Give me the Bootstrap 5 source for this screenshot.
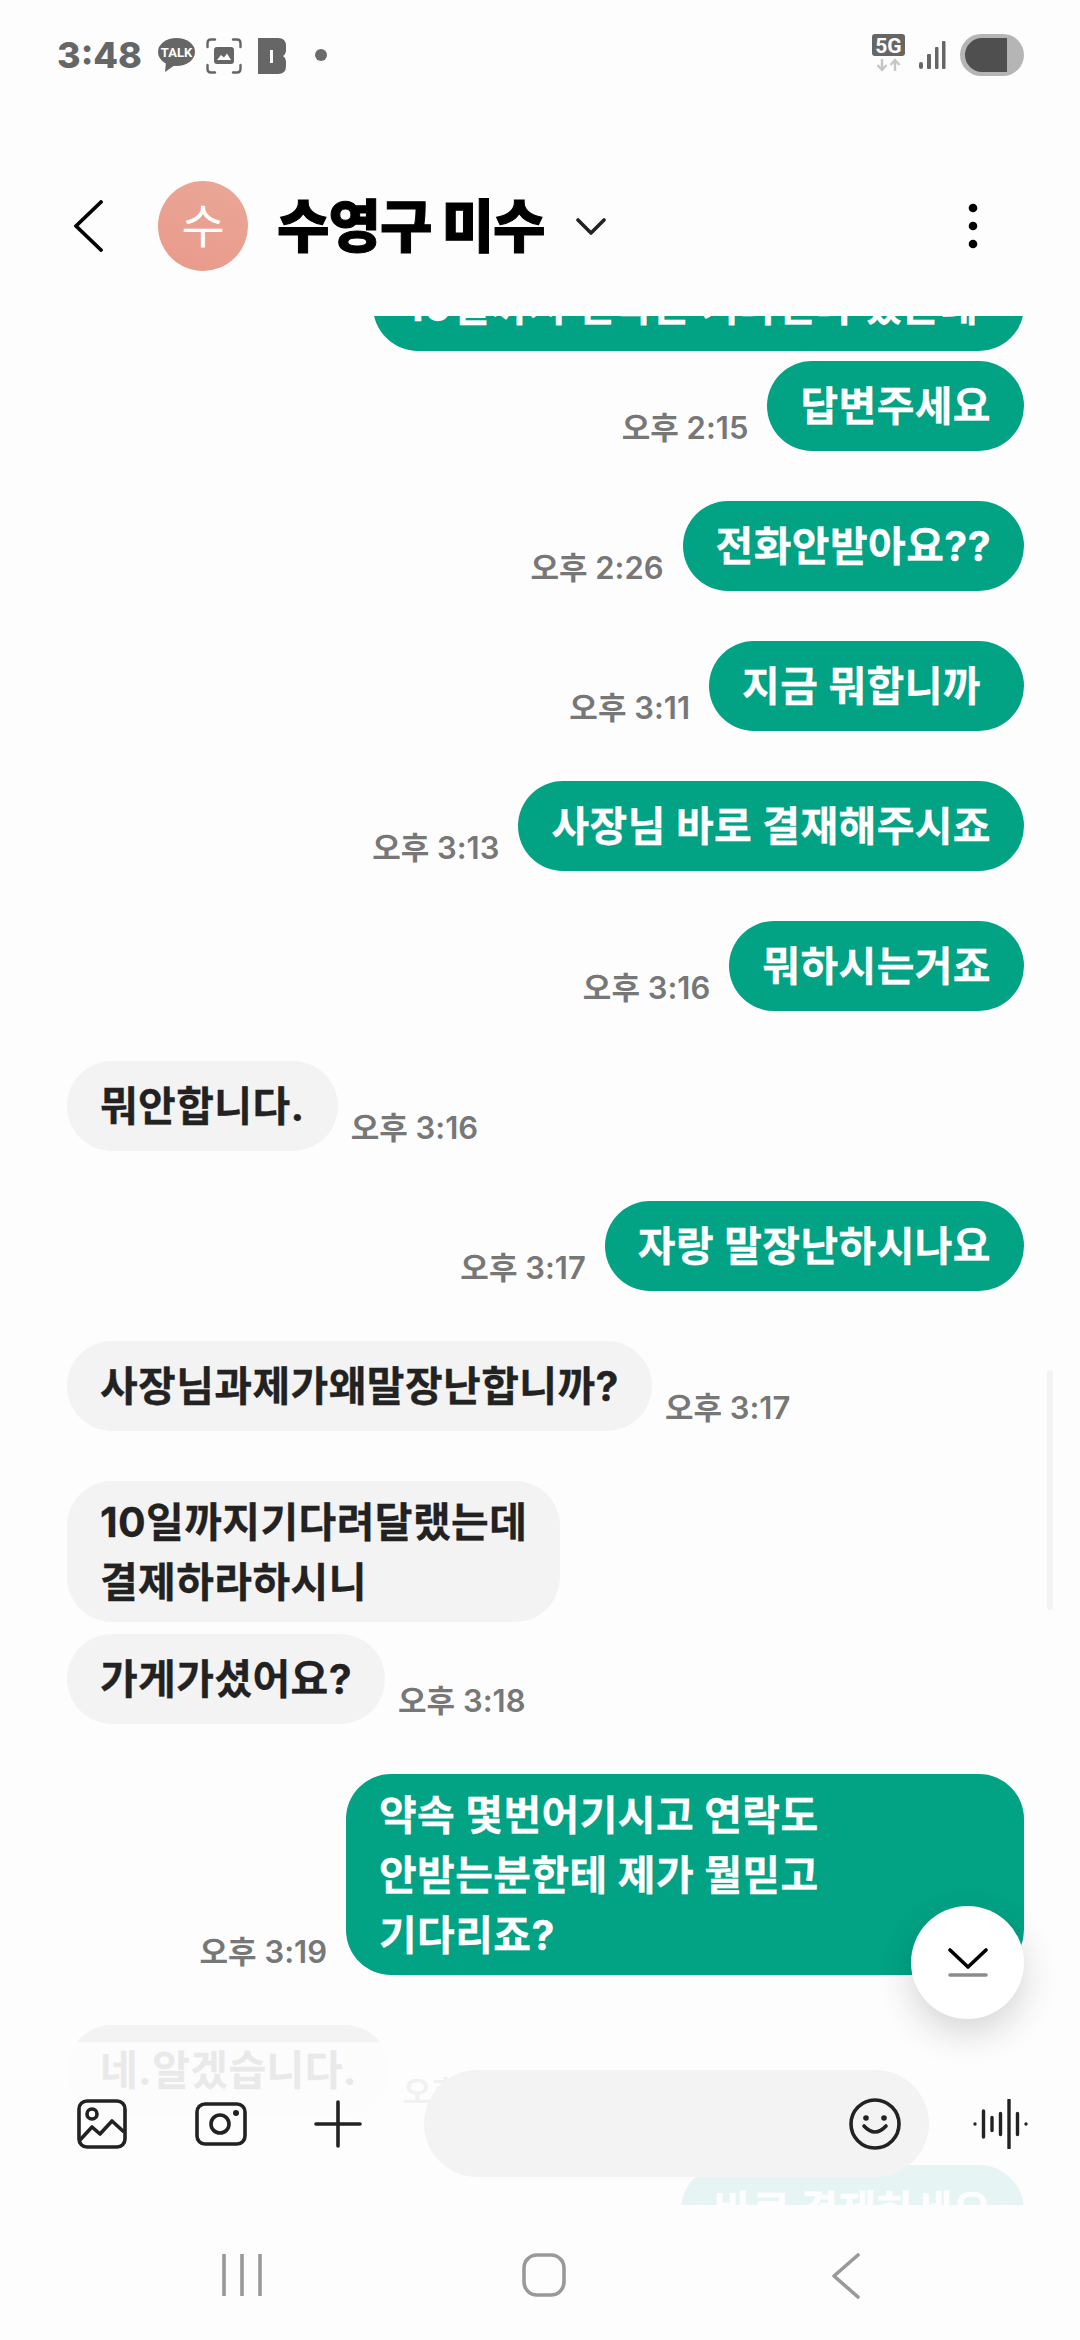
<!DOCTYPE html>
<html lang="ko">
<head>
<meta charset="UTF-8">
<meta name="viewport" content="width=device-width, initial-scale=1.0">
<link href="https://cdn.jsdelivr.net/npm/bootstrap@5.3.0/dist/css/bootstrap.min.css" rel="stylesheet">
<script src="https://cdn.jsdelivr.net/npm/bootstrap@5.3.0/dist/js/bootstrap.bundle.min.js"></script>
<style>
    body { background: #fdfdfe; font-family: "Inter", "Noto Sans CJK KR", sans-serif; }
    .phone { width: 1080px; height: 2340px; overflow: hidden; position: relative; background: #fdfdfe; }

    .status-bar { height: 110px; padding: 34px 56px 0 57px; align-items: flex-start; }
    .status-time { font-size: 36px; line-height: 42px; font-weight: 800; color: #666; width: 101px; }
    .status-talk { margin-top: 4px; }
    .status-shot { margin: 4px 0 0 11px; }
    .status-b { margin: 4px 0 0 16px; }
    .status-dot { width: 12px; height: 12px; background: #6b6b6b; border-radius: 50%; margin: 15px 0 0 29px; }
    .status-signal { margin: 6px 0 0 13px; }
    .status-battery { margin-left: 14px; }

    .chat-header { height: 206px; padding: 26px 0 0 74px; }
    .avatar { width: 90px; height: 90px; border-radius: 50%; background: linear-gradient(20deg, #e99a8b, #e9a797); color: #fff; font-size: 47px; font-weight: 400; margin-left: 54px; }
    .peer-name { font-size: 57px; font-weight: 900; color: #000; margin: 0 0 0 29px; line-height: 1; letter-spacing: -1px; -webkit-text-stroke: 1px #000; }
    .name-caret { margin-left: 31px; }
    .more-dots { margin-left: auto; margin-right: 102px; }

    .chat-scroll { height: 1889px; overflow: hidden; padding: 0 56px 0 67px; gap: 50px; }
    .msg-row { gap: 13px; align-items: flex-end; flex-shrink: 0; }
    .msg-row-me { gap: 19px; justify-content: flex-end; }
    .msg-stack { gap: 12px; }
    .clip-first { margin-top: -55px; margin-bottom: -40px; }
    .bubble { display: flex; align-items: center; min-height: 90px; font-size: 41px; line-height: 60px; font-weight: 700; padding: 10.5px 33px; border-radius: 45px; letter-spacing: .4px; white-space: pre-wrap; -webkit-text-stroke: .3px currentColor; }
    .bubble-me { background: #02a285; color: #fff; }
    .bubble-you { background: #f3f3f3; color: #222; }
    .bubble-top { width: 651px; }
    .bubble-wide { width: 678px; }
    .msg-time { font-size: 31px; line-height: 36px; font-weight: 600; color: #777; margin-bottom: 5px; white-space: nowrap; letter-spacing: 0; }

    .scroll-thumb { position: absolute; left: 1047px; top: 1370px; width: 6px; height: 240px; border-radius: 3px; background: #f3f3f4; }

    .composer-fade { position: absolute; left: 0; right: 0; top: 2042px; height: 163px; background: rgba(253,253,254,.91); }
    .composer { position: absolute; left: 0; right: 0; top: 2070px; height: 107px; padding-left: 77px; }
    .composer-pill { width: 505px; height: 107px; border-radius: 54px; background: #f3f3f3; margin-left: 62px; padding-right: 28px; }
    .icon-camera { margin-left: 68px; }
    .icon-plus { margin-left: 67px; }
    .icon-voice { margin-left: 43px; }

    .jump-btn { position: absolute; left: 911px; top: 1906px; width: 113px; height: 113px; border-radius: 50%; background: #fff; box-shadow: 0 14px 36px rgba(0,0,0,.16); }

    .nav-keys { height: 135px; position: absolute; left: 0; right: 0; bottom: 0; padding: 48px 219px 0 222px; align-items: flex-start; justify-content: space-between; }
    .nav-home { margin-right: 5px; }
</style>
</head>
<body>
<div class="phone">

    <div class="status-bar d-flex">
        <div class="status-time">3:48</div>
        <svg width="37" height="34" viewBox="0 0 37 34" class="status-talk"><ellipse cx="18.500" cy="14" rx="18.500" ry="14" fill="#666"/><path d="M8 24 L7 34 L17 27Z" fill="#666"/><text x="18.500" y="18.500" text-anchor="middle" font-family="Roboto" font-weight="700" font-size="13" fill="#fff">TALK</text></svg>
        <svg width="36" height="36" viewBox="0 0 36 36" class="status-shot" fill="none"><path d="M1.500 9V5q0-3.500 3.500-3.500H9M27 1.500h4q3.500 0 3.500 3.500V9M34.500 27v4q0 3.500-3.500 3.500h-4M9 34.500H5q-3.500 0-3.500-3.500V27" stroke="#666" stroke-width="2.400" stroke-linecap="round"/><rect x="8" y="9" width="20" height="17" rx="3" fill="#666"/><path d="M11 22l4-5 3 2.500 3-4 4 6.500z" fill="#fff"/></svg>
        <svg width="28" height="36" viewBox="0 0 28 36" class="status-b"><path fill-rule="evenodd" fill="#666" d="M0 0h20q8 0 8 8v4q0 4-3 6 3 2 3 6v4q0 8-8 8H0zM12 12v13h3V12z"/></svg>
        <div class="status-dot"></div>
        <div class="ms-auto d-flex">
            <svg width="33" height="38" viewBox="0 0 33 38"><rect width="33" height="22" rx="3" fill="#666"/><text x="16.500" y="18.500" text-anchor="middle" font-family="Roboto" font-weight="700" font-size="21" fill="#fff">5G</text><path d="M10 25v11M5.500 31l4.500 5 4.500-5M23 37V26M18.500 31l4.500-5 4.500 5" stroke="#c6c6c6" stroke-width="2.400" fill="none"/></svg>
            <svg width="28" height="30" viewBox="0 0 28 30" class="status-signal"><g fill="#666"><rect x="1" y="22" width="4" height="7" rx="2"/><rect x="9" y="14" width="4" height="15" rx="1"/><rect x="17" y="7" width="3.500" height="22" rx="1"/><rect x="24" y="1" width="3.500" height="28" rx="1"/></g></svg>
            <svg width="64" height="42" viewBox="0 0 64 42" class="status-battery"><rect width="64" height="42" rx="21" fill="#b5b5b5"/><path d="M22 4h25v34H22a17 17 0 0 1 0-34z" fill="#4f4f4f"/></svg>
        </div>
    </div>

    <div class="chat-header d-flex align-items-center">
        <svg width="30" height="52" viewBox="0 0 30 52" fill="none"><path d="M27 2 L2 26 L27 50" stroke="#000" stroke-width="3.800" stroke-linecap="round" stroke-linejoin="round"/></svg>
        <div class="avatar d-flex align-items-center justify-content-center">수</div>
        <h1 class="peer-name">수영구 미수</h1>
        <svg width="30" height="17" viewBox="0 0 30 17" fill="none" class="name-caret"><path d="M2 2 L15 15 L28 2" stroke="#222" stroke-width="3.600" stroke-linecap="round" stroke-linejoin="round"/></svg>
        <svg width="10" height="46" viewBox="0 0 10 46" class="more-dots"><circle cx="5" cy="5" r="4.300"/><circle cx="5" cy="23" r="4.300"/><circle cx="5" cy="41" r="4.300"/></svg>
    </div>

    <div class="chat-scroll d-flex flex-column">
        <div class="msg-row msg-row-me d-flex clip-first">
            <div class="bubble bubble-me bubble-top">10일까지 연락은 기다린다 했는데</div>
        </div>
        <div class="msg-row msg-row-me d-flex">
            <span class="msg-time">오후 2:15</span><div class="bubble bubble-me">답변주세요</div>
        </div>
        <div class="msg-row msg-row-me d-flex">
            <span class="msg-time">오후 2:26</span><div class="bubble bubble-me">전화안받아요??</div>
        </div>
        <div class="msg-row msg-row-me d-flex">
            <span class="msg-time">오후 3:11</span><div class="bubble bubble-me">지금 뭐합니까&nbsp;</div>
        </div>
        <div class="msg-row msg-row-me d-flex">
            <span class="msg-time">오후 3:13</span><div class="bubble bubble-me">사장님 바로 결재해주시죠</div>
        </div>
        <div class="msg-row msg-row-me d-flex">
            <span class="msg-time">오후 3:16</span><div class="bubble bubble-me">뭐하시는거죠</div>
        </div>
        <div class="msg-row d-flex">
            <div class="bubble bubble-you">뭐안합니다.</div><span class="msg-time">오후 3:16</span>
        </div>
        <div class="msg-row msg-row-me d-flex">
            <span class="msg-time">오후 3:17</span><div class="bubble bubble-me">자랑 말장난하시나요</div>
        </div>
        <div class="msg-row d-flex">
            <div class="bubble bubble-you">사장님과제가왜말장난합니까?</div><span class="msg-time">오후 3:17</span>
        </div>
        <div class="msg-stack d-flex flex-column align-items-start">
            <div class="bubble bubble-you">10일까지기다려달랬는데
결제하라하시니</div>
            <div class="msg-row d-flex">
                <div class="bubble bubble-you">가게가셨어요?</div><span class="msg-time">오후 3:18</span>
            </div>
        </div>
        <div class="msg-row msg-row-me d-flex">
            <span class="msg-time">오후 3:19</span><div class="bubble bubble-me bubble-wide">약속 몇번어기시고 연락도
안받는분한테 제가 뭘믿고
기다리죠?</div>
        </div>
        <div class="msg-row d-flex">
            <div class="bubble bubble-you">네.알겠습니다.</div><span class="msg-time">오후 3:19</span>
        </div>
        <div class="msg-row msg-row-me d-flex">
            <div class="bubble bubble-me">바로 결제하세요</div>
        </div>
    </div>

    <div class="scroll-thumb"></div>
    <div class="composer-fade"></div>

    <div class="composer d-flex align-items-center">
        <svg width="50" height="50" viewBox="0 0 50 50" fill="none" stroke="#222" stroke-width="3.600" stroke-linejoin="round"><rect x="2" y="2" width="46" height="46" rx="8"/><circle cx="15" cy="15" r="5"/><path d="M3 41 L15 28 L23 35 L35 22 L47 33"/></svg>
        <svg width="52" height="44" viewBox="0 0 52 44" fill="none" stroke="#222" stroke-width="3.600" class="icon-camera"><rect x="2" y="2" width="48" height="40" rx="8"/><circle cx="25" cy="22" r="9"/><circle cx="41" cy="11" r="3" fill="#222" stroke="none"/></svg>
        <svg width="48" height="48" viewBox="0 0 48 48" fill="none" stroke="#222" stroke-width="3.600" stroke-linecap="round" class="icon-plus"><path d="M24 2V46M2 24H46"/></svg>
        <div class="composer-pill d-flex align-items-center justify-content-end">
            <svg width="52" height="52" viewBox="0 0 52 52" fill="none" stroke="#222" stroke-width="3.600" stroke-linecap="round"><circle cx="26" cy="26" r="24"/><path d="M15 28q11 12 22 0"/><circle cx="17" cy="20" r="2.800" fill="#222" stroke="none"/><circle cx="35" cy="20" r="2.800" fill="#222" stroke="none"/></svg>
        </div>
        <svg width="56" height="50" viewBox="0 0 56 50" fill="none" stroke="#222" stroke-width="3.400" stroke-linecap="round" class="icon-voice"><path d="M3 25v.1M11.500 12v26M20 18.500v13M28.500 14.500v21M37 1v48M45.500 14.500v21M54 25v.1"/></svg>
    </div>

    <div class="jump-btn d-flex align-items-center justify-content-center">
        <svg width="40" height="30" viewBox="0 0 40 30" fill="none" stroke-linecap="round"><path d="M2 2 L20 19 L38 2" stroke="#000" stroke-width="3.600" stroke-linejoin="round"/><path d="M2 27H38" stroke="#8c8c8c" stroke-width="3.600"/></svg>
    </div>

    <div class="nav-keys d-flex">
        <svg width="40" height="44" viewBox="0 0 40 44" stroke="#999" stroke-width="3.600"><path d="M2 1V43M20 1V43M38 1V43"/></svg>
        <svg width="44" height="44" viewBox="0 0 44 44" fill="none" stroke="#999" stroke-width="3.600" class="nav-home"><rect x="2" y="2" width="40" height="40" rx="13"/></svg>
        <svg width="30" height="46" viewBox="0 0 30 46" fill="none" stroke="#999" stroke-width="3.600" stroke-linecap="round" stroke-linejoin="round"><path d="M27 2 L3 23 L27 44"/></svg>
    </div>

</div>
</body>
</html>
